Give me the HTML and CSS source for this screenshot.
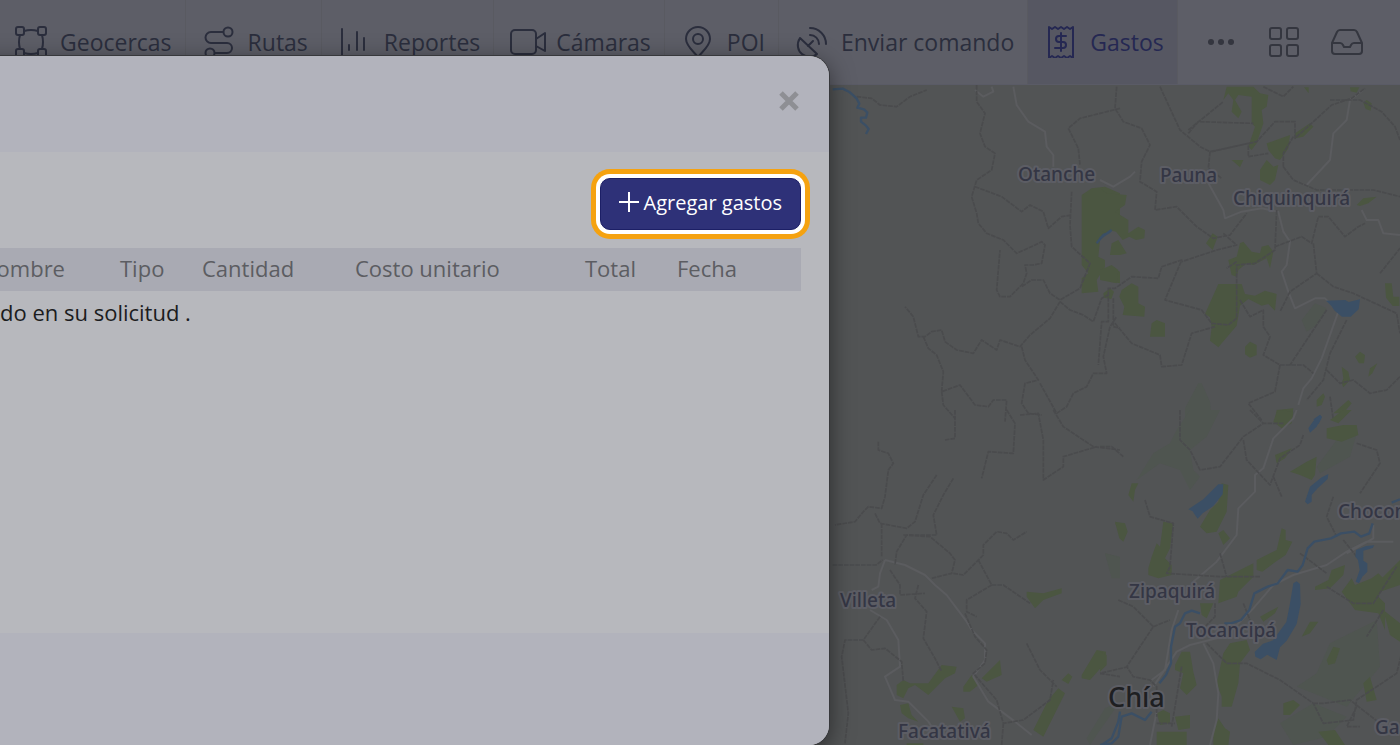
FILE: index.html
```html
<!DOCTYPE html>
<html lang="es">
<head>
  <meta charset="UTF-8">
  <meta name="viewport" content="width=device-width, initial-scale=1.0">
  <title>Gastos</title>
  <link rel="stylesheet" href="styles.css">
</head>
<body>
  <nav class="topbar">
    <a class="nav-item first" href="#">
      <svg class="icon" viewBox="0 0 32 32"><rect x="1" y="1" width="8" height="8" rx="2"/><rect x="23" y="1" width="8" height="8" rx="2"/><rect x="1" y="23" width="8" height="8" rx="2"/><rect x="23" y="23" width="8" height="8" rx="2"/><path d="M9 5q7-2 14 0M9 27q7 2 14 0M5 9q-2 7 0 14M27 9q2 7 0 14"/></svg>
      <span>Geocercas</span>
    </a>
    <a class="nav-item" href="#">
      <svg class="icon" viewBox="0 0 32 32"><circle cx="25" cy="6" r="4.5"/><circle cx="7" cy="27" r="4.5"/><path d="M20 6H8a5 5 0 0 0 0 11h16a5 5 0 0 1 0 10H12"/></svg>
      <span>Rutas</span>
    </a>
    <a class="nav-item" href="#">
      <svg class="icon" viewBox="0 0 32 32"><path d="M3 3v27h26M10 19v5M18 6v18M25 12v12"/></svg>
      <span>Reportes</span>
    </a>
    <a class="nav-item" href="#">
      <svg class="icon camera" viewBox="0 0 32 32"><rect x="0" y="4" width="25" height="24" rx="4"/><path d="M25 13l9-6v18l-9-5"/></svg>
      <span>Cámaras</span>
    </a>
    <a class="nav-item" href="#">
      <svg class="icon" viewBox="0 0 32 32"><path d="M16 31C12 26 4 20 4 13a12 12 0 0 1 24 0c0 7-8 13-12 18z"/><circle cx="16" cy="13" r="5"/></svg>
      <span>POI</span>
    </a>
    <a class="nav-item" href="#">
      <svg class="icon" viewBox="0 0 32 32"><path d="M4 12c-4 6-2 13 2 16s11 4 15 0zM12 20l5-5M14 9a9 9 0 0 1 9 9M14 2a16 16 0 0 1 16 16"/></svg>
      <span>Enviar comando</span>
    </a>
    <a class="nav-item active" href="#" aria-current="page">
      <svg class="icon" viewBox="0 0 32 32"><path d="M4 1l3 2 3-2 3 2 3-2 3 2 3-2 3 2 3-2v31l-3-2-3 2-3-2-3 2-3-2-3 2-3-2-3 2zM21 10h-7a3 3 0 0 0 0 6h4a3 3 0 0 1 0 6h-8M16 7v18"/></svg>
      <span>Gastos</span>
    </a>
    <div class="tools">
      <button class="tool" type="button" aria-label="Más">
        <svg class="icon dots" viewBox="0 0 32 32"><circle cx="6" cy="16" r="3"/><circle cx="16" cy="16" r="3"/><circle cx="26" cy="16" r="3"/></svg>
      </button>
      <button class="tool" type="button" aria-label="Aplicaciones">
        <svg class="icon" viewBox="0 0 32 32"><rect x="2" y="2" width="11" height="11" rx="2"/><rect x="19" y="2" width="11" height="11" rx="2"/><rect x="2" y="19" width="11" height="11" rx="2"/><rect x="19" y="19" width="11" height="11" rx="2"/></svg>
      </button>
      <button class="tool" type="button" aria-label="Bandeja">
        <svg class="icon" viewBox="0 0 32 32"><path d="M1 17L6 6q1-2 3-2h14q2 0 3 2l5 11v8q0 3-3 3H4q-3 0-3-3zM1 17h8q2 0 3 2l1 2h6l1-2q1-2 3-2h8"/></svg>
      </button>
    </div>
  </nav>

  <main class="map">
    <svg class="map-canvas" viewBox="0 85 1400 660" preserveAspectRatio="xMaxYMin slice">
      <!-- noroeste -->
      <svg x="820" y="80" width="300" height="340" viewBox="0 0 900 1020" overflow="visible">
        <path class="park" d="M785 345l30-20 40-5 45 20v75l-15 0-10-10-15 15 5 35-25 25-5 50 20 10 0 20-25 40 5 35-50 5v-45l20-15-20-25zM850 640l20-15 12 10-8 22-22-4zM845 570l30-5 25 10v35l-30-5z"/>
        <path class="road" d="M465 30l25 20 30-15-5-15M580 20l10 55 35 50 50 30 5 45 20 25v35"/>
        <path class="border" d="M110 50l45 5 25 20 50 5 40-30 50-20M470 15l0 50 25 35-15 60 15 40 30 20-10 50-45 30-15 50 15 50 5 30 25 30 50 20 40 40 55-25 20-10 10 10-10 55-25 5-25 0 5 25-10 30-40 40-30 0-10-20 5-60 5-60M465 320l80 30 60 45 25-20 40 20 15 50 40-35 30-5M755 335l-5 100 5 65 55 50-30 75-60 35-30-20-20-40-35 0-30 20M720 665l-30 50-60 50-30 35-60-20-10 30-45-30-25 40-50-10-35-25-10-35-30 5-20 15-20 0-15-60-25-30M720 665l30 25 40 15 30 20 25-70 20-10M605 800l10 40 40 60-40 10-10 60 20 30 40 5M660 910l50 90 30-20 20-40 40-20 20-40 40 0-10-50 20-90 20-30M310 770l15 35 25 20 20 50-5 60 55-20 45 60 40 5 15-20 40 0-5 65M365 935l5 40 35 40M900 85l-60 15-60 15-35 30 30 60 5 50M880 655v85l20 5"/>
        <path class="river" d="M38 28l30-2 20 10 12 10 10 10 8 15-6 12 20 5 10 10-4 15-15 0 0 12 15 12 8 10-8 15"/>
        <path class="river" d="M830 490l20-25 20-10"/>
      </svg>
      <!-- noreste -->
      <svg x="1100" y="80" width="300" height="340" viewBox="0 0 900 1020" overflow="visible">
        <path class="park" d="M370 60l10-40 80 0 20 20 25 5-5 35-15 10 5 40-20 60-15 20-10-10 20-60-10-10 0-80-40-5-10 15 20 35-10 20-20-20 5-35-15-20zM0 325l20 15 60 5-5 30-30 20 40 25 0 40 30-20 20 10-2 25-25 5-20-10-20 10-20-25-20-5-10 10-18-10zM35 490l20-10 25 40-20 5-30 0zM0 570l35-15 20 15-5 40-50-10zM500 190l70-25-5 40-25 35-15-5-20-25zM480 270l20-30 20 20 15-5-10 45-15 15-30-15zM585 160l45-30 10 10-30 30-25 5zM395 240l35 0-10 22zM318 490l20-30 15 10-15 40zM385 540l25-10 10-40 10-5 25 30 25 5 5-20 20-5 15 20-10 50-10-30-40 20-20-5-25 20-5 20-15-5zM355 612l70 0 10 30 30 5 30-15 35 10-5 50-20-20-20 5-40-20-25 20-10 60-55 65-25-20 5-40-5-30-15-10zM65 630l30-20 20 10 0 50 20 10-2 30-65-5 5-25-15-30zM155 730l15-10 25 10v40h-45zM435 800l15-15 20 10 0 30-20 8-15-10zM790 68l10-8 15 10-3 22-15-5zM770 375l20-20 40-5-25 20-25 8zM855 610l20 0 5 40 18 0v28l-20 0-20-25zM765 830l15-15 15 10-3 25-15 0zM725 860l20 15 5 25-20 22-5-12 5-15zM805 890l5-25 22-15-15 30zM650 960l20-20 5 10-10 25-15 5zM530 990l50-5-5 35-50-5zM700 1000l45-40 10 10-25 30zM750 22h28l-8 16-18-4zM612 22h14l0 18z"/>
        <path class="wood" d="M255 985l40-75 10 0 25 55 5 50-80 5zM605 720l40-50 35 15-30 50-30 20z"/>
        <path class="road" d="M790 30l-40 30-10 60-40 40-10 80-70 75M320 300l50 90 5 25 50-20 60-10 50 10 15 60 20 30-10 70-15 20 20 60 20 50 60-30 30 0 40 40-50 140-30 60-25 30-15 50M0 300l40 20 50-30 15-15M785 390l15 30 35 0 15 40 50 5"/>
        <path class="border" d="M50 20l-5 65 25 40 55 20 25 50-25 50-5 60 50 30-5 55 65-10 60 60 50 35 50-10 50-65M180 20l60 130 60 50 30 15 140-30 55-60 60 0 0 50 110-100 60-20 40-30M330 215l-5 50 40 30M265 160l30-35 165 5M265 150l105-85M335 215l110-25 0 40 60-10M550 260l30 40 70 30 170 0 80 20M550 260l0-40 30-50M530 390l-5 120-60 40-55 5 0 160-25 20-50-5-30-40-110-30 50-120-60 20-10 35-80-5-50 35-20 0 0 100-20 0-10 130M45 730l50 60 85 35 5 35 60-5 30-95 70-20M370 460l40 35-60 15-105 35M420 660l30 50 40-20 0 50 20 30-20 55 50 30 70 0 30 25M540 855l-15 80-80 35 40 50M525 500l80-30 30 20 20-80 30 0 50 60 40-30 20-10M640 490l10 90-80 55-30 60M650 580l50 40 60 20 130 60 10 60M740 720l-50 100-20 80-50 60M680 690l-60 90-50 75M680 870l40 40 40-10 50 40 50-10 40-40M840 580l60-75M690 60l90 0 65 35 40 45 15 40M410 545l-30 20M690 950l10 70M490 20l60 30 30-30"/>
        <path class="water" d="M678 662l58-2 10 6 34-8-4 30-24 22-26 0-22-18-10-14z"/>
        <path class="water" d="M640 1018l20-14 6 8-10 20z"/>
        <path class="river" d="M0 475l35-25"/>
      </svg>
      <!-- suroeste -->
      <svg x="820" y="410" width="300" height="335" viewBox="0 0 900 1005" overflow="visible">
        <path class="park" d="M620 545l50 5 55-15 0 15-55 20-25 25-25-35zM230 825l20-15 20 10 55 0 40-55 45 5-5 20-30 15-50 50-40-30-20 10-15 30-20-10zM240 885l25-5 10 35 20 20-30-10-20-15zM395 890l35 5 5 30-15 10zM430 830l25-35 20 30-25 20-20 0zM485 805l55-55 5 45-45 20zM640 960l45-90 30-35 20 15-25 50-40 80zM725 810l20-20 12 10-12 22zM785 795l45-75 28 5-3 35-45 50-25-5zM885 340l15 0 0 30zM260 1000h50v5h-50z"/>
        <path class="wood" d="M800 985l55-90 45-20-70 100-20 30zM855 430l45 10v60l-25-10z"/>
        <path class="road" d="M195 450l60 15 60 30 30 30 35 30 30 40 30 40 15 25 40 40 0 50-35 50 45 75 80 60 50 40M195 450l-15 40-5 40-20 10M150 600l50 30 35 60 5 80-45 30 30 70 40 5 60 60 20 30"/>
        <path class="border" d="M405 0v85l-30 5M175 95l0 25 30 10 15 30-15 20-10 80-10 35-40-5-15 15-25 30-60 10M165 310l15 30 80 15 25-20 25-80 40-60M400 205l-30 50-30 60 10 60-90 0-30 50-5 40M185 340v100M38 465h130l20-15M250 375l80 5 60 50 15 20-10 40-60 15M400 490l30 5 60-60 0-30 40-40 30 5 20 20 40-25M475 450l40 75-75 45 0 35 30 15M515 525l35 0 80 55M560 0l25 40-5 90-75-5-20 80M600 15l55-5 15 80 0 120 60-40 0-30 100-30M700 0l30 50 90 60 80 10M210 480l30 45 0 30 75-5M295 525l-10 40 35 40-10 80 35 60 20 40M180 620l-50 70-55 0-10 50 20 170-10 90M130 690l25 30 40-5 50 40 5 60M435 610l30 70 35 40-5 40-35 30 70 80 20 70 60-10 80-60 10-60M620 700l40 80 50 50M550 940l-5 65M840 790l60 10"/>
        <path class="river" d="M845 1005l30-20 20-50 5-30"/>
      </svg>
      <!-- sureste -->
      <svg x="1100" y="410" width="300" height="335" viewBox="0 0 900 1005" overflow="visible">
        <path class="wood" d="M230 60l40-60 90 0-40 80-50 40 10 60 20 20-30 40-30-60-60-20-70 50 50-80 50-30zM15 430l45 15 0 60-25 0zM690 700l80-40 60-30 10 140-100 120-100-40-50-20 60-40zM650 170l60-80 60-20-20 70-90 50zM540 940l100-60 100 40-60 60-100 25z"/>
        <path class="park" d="M525 20l10-20 45 5-5 35-30 15-25-20zM570 185l50-30 30-15-5 55-10 15-35-15zM525 135l50-20-20 30-25 15zM365 220l20 5-5 80-30 60-30 5-20-20 30-50 25-25zM85 255l10-35 20 0-10 20-5 35zM45 335l30 5 8 25-13 30-12-10zM355 370l15-10 20 25-20 20zM155 440l15-40 10 10 10-75 30 5-10 75-15 30 20 20 0 30-40 10-30-10 0-20zM470 450l60-30 15-65 12 5 0 30 20 5-20 40-30 20-40 30-17-5zM360 510l100-50 0 40-45 45-5 15-55 20zM300 580l40 0-20 45-15-10zM480 620l55-30-10 20-35 25zM605 680l25-45 25 0-25 35zM645 530l40-20 10-30 40-15-5 30-40 40-45 5zM725 545l30-40 10 20 50-20 20-15 20 20-20 50 20 20 0 80-20-50-70-10zM850 600l50 40v55l-30-20zM680 55l50-10 40 0 5 30-50 20-45-10zM690 30l40-30h25l-40 40zM370 730l20-30 50-10 10 30-30 40-5 60-20 70-30 0 0-30-15-40zM225 765l20-40 25 0 10 60 10 40-30 30-20-20 10-45-25-10zM0 725l20 10 0 30-20 20zM340 960l15-35 20 30 15 10-5 40h-45zM170 910l20-10 20 10 0 30-30 5zM225 920l45-5 0 40-35 5zM170 965h90v40h-90zM680 750l20-40 20 5-15 45-20 5zM790 820l20-20 20 70-30 5zM550 880l30-10 20 15-30 30-20 0zM655 965l50-5 30 45h-50zM840 510l60-60v75l-60 20z"/>
        <path class="road" d="M590 0l-10 25-60 60-30 90-25 20 0 50-50 50-5 80-60 80-70 60M880 395l-80 0-60 30-60 40-100 30-60 30-60 70-60 60-50 30-80 20-40 20-70 105M235 600l-20 60-20 120-40 30M310 700l30 60 15 90-5 80-20 75M820 345l0 40-80 45M170 905l-20 100"/>
        <path class="border" d="M0 110l35 0 35 30M240 0l0 90 30 30 30 60 60-10 70-90 60-40 60 0M450 0l40 40M430 90l10 60 70 75 30-80 60-40 10-30M520 200l25 60M135 270l15 50 70 20-10 130-10 20 160 10 120 0M360 430l20 70M770 100l60 20 10 40-60 90M700 260l-20 60 30 60M680 530l80 50 60 0 70-110M850 600l-50 80M320 700l60 60 60 0 100 50 100 70 30 60 90-10 10-60 120-80 20-80M55 570l45 20 60 60-80 120 20 30 50 10 20 20 0 90M160 650l50-20M85 770l-85 20M245 770l-30 180M640 880l30 0 80-10 90 70M770 890l-30 60 40 0M170 940l55 0M345 580l0 40-40 40M430 580l20 50M730 390l40 50M600 430l80 60"/>
        <path class="water" d="M265 298l45-30 45-45 15 0-2 30-28 35-32 22-15 16-10-14-5-8zM625 55l15-22 20-18 5 5-15 30-20 18zM615 275l15-45 35-28 20-10-2 15-30 28-18 20 0 20-12 8zM580 520l10-6 10 8 2 60-12 60-30 50-20 20-10 38-18-10-10-6-20 14-16-8-2-14 25-25 30-10 40-55 10-50z"/>
        <path class="water" d="M768 420l30-12 25-2-5 8-28 8 0 30 12 8 0 25-15 15-10 20-10-5 12-35-5-30-8-10z"/>
        <path class="river" d="M900 268l-25 10M818 340l-10 30-25 10-20-15-40 5-30 15-50 10-20 20-15 50-15 20-30-5-30 40-30 10-40 20-15 50-25 30-30 10-20 0M300 610l-25-8-20 8-15 30-15 10-12 60 0 50-15 35-20 25M155 905l-20 25-40-20-30 10-10 60-20 20-35 5"/>
      </svg>
      <g class="town">
        <text x="1018" y="181">Otanche</text>
        <text x="1160" y="182">Pauna</text>
        <text x="1233" y="205">Chiquinquirá</text>
        <text x="1338" y="518">Chocontá</text>
        <text x="840" y="607">Villeta</text>
        <text x="1129" y="598">Zipaquirá</text>
        <text x="1186" y="637">Tocancipá</text>
        <text x="898" y="738">Facatativá</text>
        <text x="1375" y="734">Gachetá</text>
        <text class="city" x="1108" y="707">Chía</text>
      </g>
    </svg>
  </main>

  <section class="modal" role="dialog" aria-label="Gastos">
    <header class="modal-header">
      <button class="close" type="button" aria-label="Cerrar">
        <svg class="close-icon" viewBox="0 0 20 20"><path d="M2 2l16 16M18 2L2 18"/></svg>
      </button>
    </header>
    <div class="modal-body">
      <div class="actions">
        <button class="add" type="button">
          <svg class="plus" viewBox="0 0 20 20"><path d="M10 0v20M0 10h20"/></svg>
          <span>Agregar gastos</span>
        </button>
      </div>
      <table class="expenses">
        <thead>
          <tr>
            <th class="col-name">Nombre</th>
            <th class="col-type">Tipo</th>
            <th class="col-qty">Cantidad</th>
            <th class="col-cost">Costo unitario</th>
            <th class="col-total">Total</th>
            <th>Fecha</th>
          </tr>
        </thead>
        <tbody>
          <tr>
            <td class="empty" colspan="6">do en su solicitud .</td>
          </tr>
        </tbody>
      </table>
    </div>
    <footer class="modal-footer"></footer>
  </section>
</body>
</html>
```
FILE: styles.css
```css
* {
  box-sizing: border-box;
}
body {
  margin: 0;
  height: 100vh;
  display: flex;
  flex-direction: column;
  position: relative;
  overflow: hidden;
  font-family: "Open Sans", "Noto Sans", sans-serif;
  font-size: 22px;
  background: #525455;
}
button {
  font-family: inherit;
  cursor: pointer;
}

/* barra superior */
.topbar {
  display: flex;
  flex: none;
  height: 85px;
  background: #5d5e67;
  border-bottom: 1px solid #5a5b66;
}
.nav-item {
  display: flex;
  align-items: center;
  gap: 13px;
  padding: 0 13px 0 17px;
  border-right: 1px solid #595a61;
  color: #2b2e3d;
  font-size: 23px;
  text-decoration: none;
  white-space: nowrap;
}
.nav-item.first {
  padding-left: 15px;
}
.nav-item.active {
  background: #565762;
  color: #252852;
}
.icon {
  display: block;
  flex: none;
  width: 32px;
  height: 32px;
  fill: none;
  stroke: currentColor;
  stroke-width: 2;
  stroke-linecap: round;
  stroke-linejoin: round;
}
.icon.camera {
  overflow: visible;
}
.icon.dots {
  fill: currentColor;
  stroke: none;
}
.tools {
  display: flex;
  align-items: center;
  gap: 31px;
  padding-left: 27px;
}
.tool {
  padding: 0;
  border: 0;
  background: none;
  color: #34363f;
}

/* mapa */
.map {
  flex: 1;
  min-height: 0;
}
.map-canvas {
  display: block;
  width: 100%;
  height: 100%;
}
.park {
  fill: #4b5641;
}
.wood {
  fill: #4f5550;
}
.water {
  fill: #3b4f65;
}
.river,
.road,
.border {
  fill: none;
  stroke-linejoin: round;
}
.river {
  stroke: #3b4f65;
  stroke-width: 7;
}
.road {
  stroke: #5b5c5f;
  stroke-width: 6;
}
.border {
  stroke: #4a4b4d;
  stroke-width: 5;
  stroke-dasharray: 14 3;
}
.town {
  font-family: "Noto Sans", sans-serif;
  font-size: 19px;
  font-weight: 500;
  fill: #343644;
  stroke: #5c5d64;
  stroke-width: 4px;
  stroke-linejoin: round;
  paint-order: stroke;
}
.city {
  font-size: 27px;
  fill: #1e1f22;
}

/* ventana de gastos, sale por la izquierda */
.modal {
  position: absolute;
  top: 56px;
  bottom: 0;
  left: -56px;
  width: 885px;
  display: flex;
  flex-direction: column;
  overflow: hidden;
  border-radius: 20px;
  background: #b7b8bd;
  box-shadow: 0 0 0 1px #37383b, 0 6px 24px rgba(0, 0, 0, .5);
}
.modal-header {
  display: flex;
  align-items: center;
  justify-content: flex-end;
  height: 96px;
  padding: 0 30px 6px;
  background: #b2b3bc;
}
.close {
  padding: 0;
  border: 0;
  background: none;
  color: #8e8f94;
}
.close-icon {
  display: block;
  width: 20px;
  height: 20px;
  stroke: currentColor;
  stroke-width: 5;
}
.modal-body {
  flex: 1;
  padding: 26px 28px;
}
.actions {
  display: flex;
  justify-content: flex-end;
  margin-bottom: 18px;
}
.add {
  display: flex;
  align-items: center;
  gap: 5px;
  height: 52px;
  padding: 0 18px 4px;
  border: 1px solid #1c1f66;
  border-radius: 10px;
  background: #2e3178;
  box-shadow: 0 0 0 4px #fff, 0 0 0 9px #f5a210;
  color: #fff;
  font-size: 20px;
}
.plus {
  width: 20px;
  height: 20px;
  stroke: currentColor;
  stroke-width: 2;
}
.expenses {
  width: 100%;
  table-layout: fixed;
  border-collapse: collapse;
}
.expenses th,
.expenses td {
  padding: 6px 8px;
  line-height: 31px;
  text-align: left;
  font-weight: 400;
  white-space: nowrap;
}
.expenses th {
  padding: 5px 8px 7px;
  background: #a9aab3;
  color: #5c5d62;
}
.col-name {
  width: 140px;
}
.col-type {
  width: 82px;
}
.col-qty {
  width: 153px;
}
.col-cost {
  width: 230px;
}
.col-total {
  width: 92px;
}
.expenses .empty {
  padding-left: 28px;
  color: #1b1c20;
}
.modal-footer {
  height: 112px;
  background: #b2b3bc;
}
```
